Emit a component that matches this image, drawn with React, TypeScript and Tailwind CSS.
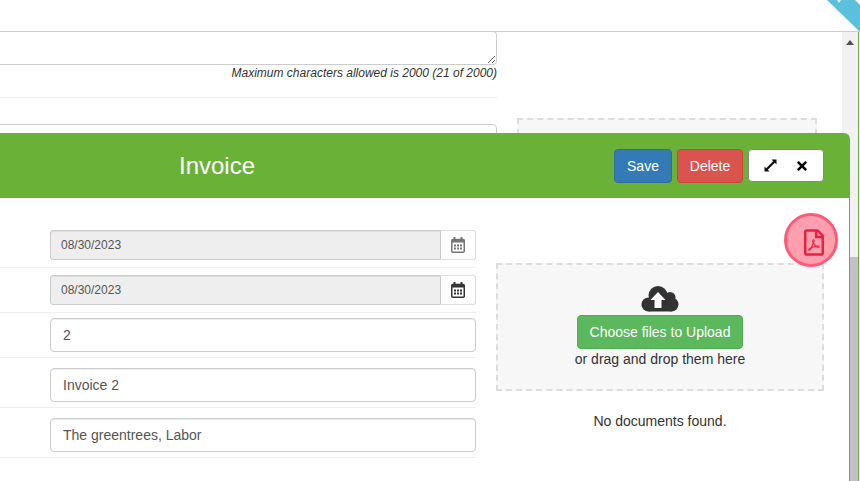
import React from 'react';
import { FaRegFilePdf, FaTimes } from 'react-icons/fa';

const font = "font-['Liberation_Sans',Arial,sans-serif]";

const CalendarIcon = ({ muted }: { muted?: boolean }) => {
  const color = muted ? '#777' : '#333';
  return (
    <svg width="14" height="16" viewBox="0 0 14 16" className="block">
      <rect x="2.5" y="0" width="2" height="3" fill={color} />
      <rect x="9.5" y="0" width="2" height="3" fill={color} />
      <rect x="0.75" y="2.5" width="12.5" height="12.75" rx="1" fill="#fff" stroke={color} strokeWidth="1.5" />
      <rect x="1" y="2.5" width="12" height="3" fill={color} />
      <g fill={color}>
        <rect x="3" y="7.5" width="2" height="2" />
        <rect x="6" y="7.5" width="2" height="2" />
        <rect x="9" y="7.5" width="2" height="2" />
        <rect x="3" y="10.5" width="2" height="2" />
        <rect x="6" y="10.5" width="2" height="2" />
        <rect x="9" y="10.5" width="2" height="2" />
      </g>
    </svg>
  );
};

const DateField = ({ value, muted }: { value: string; muted?: boolean }) => (
  <div className="flex h-[30px] w-[426px] text-xs text-[#555]">
    <div className="flex flex-1 items-center rounded-l-[3px] border border-[#ccc] bg-[#eee] px-[10px] shadow-[inset_0_1px_1px_rgba(0,0,0,0.075)]">
      {value}
    </div>
    <div className="flex w-[35px] items-center justify-center rounded-r-[3px] border border-l-0 border-[#ddd] bg-white">
      <CalendarIcon muted={muted} />
    </div>
  </div>
);

const TextField = ({ value }: { value: string }) => (
  <div className="flex h-[34px] w-[426px] items-center rounded-[4px] border border-[#ccc] bg-white px-3 text-sm text-[#555] shadow-[inset_0_1px_1px_rgba(0,0,0,0.075)]">
    {value}
  </div>
);

const rows = [
  { pad: 'pb-[7px]', field: <DateField value="08/30/2023" muted /> },
  { pad: 'pt-[7px] pb-[7px]', field: <DateField value="08/30/2023" /> },
  { pad: 'pt-[5px] pb-[5px]', field: <TextField value="2" /> },
  { pad: 'pt-[10px] pb-[5px]', field: <TextField value="Invoice 2" /> },
  { pad: 'pt-[10px] pb-[5px]', field: <TextField value="The greentrees, Labor" /> },
];

const CloudUpload = () => (
  <svg width="38" height="26" viewBox="0 0 38 26" className="block">
    <g fill="#333">
      <circle cx="7.5" cy="18.5" r="7" />
      <circle cx="17" cy="9.5" r="9.5" />
      <circle cx="29" cy="11.5" r="5.5" />
      <circle cx="30.5" cy="18.5" r="7" />
      <rect x="7.5" y="14" width="23" height="11.5" />
    </g>
    <path d="M17 6 L24.5 14 H20.5 V22 H13.5 V14 H9.5 Z" fill="#fff" />
  </svg>
);

const ExpandIcon = () => (
  <svg width="13" height="13" viewBox="0 0 13 13" className="block">
    <path d="M7.5 0.5 H12.5 V5.5 L10.8 3.8 L3.8 10.8 L5.5 12.5 H0.5 V7.5 L2.2 9.2 L9.2 2.2 Z" fill="#111" />
  </svg>
);

const PageBehind = () => (
  <div className="flex h-[449px] min-w-0 flex-1">
    <div className="w-[497px] shrink-0">
      <textarea
        readOnly
        className="-mt-px -ml-[23px] block h-[34px] w-[520px] rounded-[4px] border border-[#ccc] bg-white"
      />
      <p className="text-right text-xs leading-[17px] text-[#333] italic">
        Maximum characters allowed is 2000 (21 of 2000)
      </p>
      <div className="mt-[15px] border-b border-[#eee]" />
      <div className="mt-[26px] -ml-[23px] h-[34px] w-[520px] rounded-[4px] border border-[#ccc] bg-white" />
    </div>
    <div className="mt-[86px] ml-5 h-[60px] w-[300px] border-2 border-dashed border-[#ddd] bg-[#f7f7f7]" />
  </div>
);

const Scrollbar = () => (
  <div className="flex h-[449px] w-4 shrink-0 flex-col bg-[#f1f1f1]">
    <div className="flex h-[17px] items-center justify-center pt-[3px]">
      <div className="h-0 w-0 border-x-[4px] border-b-[5px] border-x-transparent border-b-[#505050]" />
    </div>
    <div className="mt-[208px] flex-1 bg-[#c1c1c1]" />
  </div>
);

const App = () => {
  return (
    <div className={`${font} relative h-[481px] w-[860px] overflow-hidden bg-white text-sm text-[#333]`}>
      <div className="h-[32px] border-b border-[#ccc]" />
      <div className="flex">
        <PageBehind />
        <div className="w-[25px] shrink-0" />
        <Scrollbar />
        <div className="w-[1px] shrink-0 bg-[#6ab138]" />
        <div className="w-[1px] shrink-0 bg-white" />
      </div>

      {/* corner ribbon */}
      <svg width="33" height="32" viewBox="0 0 33 32" className="absolute top-0 right-0">
        <polygon points="0,0 33,0 33,32" fill="#5bc0de" />
        <path d="M10 0 L12 2.5 L14 0 Z M28 0 L33 0 L33 5 Z" fill="#fff" />
      </svg>

      {/* invoice dialog */}
      <div className="absolute top-[133px] left-0 flex h-[348px] w-[850px] flex-col">
        <div className="flex h-[65px] shrink-0 items-center rounded-tr-[6px] bg-[#6ab138]">
          <h2 className="w-[434px] text-center text-2xl font-normal text-white">Invoice</h2>
          <div className="ml-auto flex items-center gap-[5px] pr-[26px]">
            <button className="h-[34px] w-[58px] rounded-[4px] border border-[#2e6da4] bg-[#337ab7] text-sm text-white">
              Save
            </button>
            <button className="h-[34px] w-[66px] rounded-[4px] border border-[#d43f3a] bg-[#d9534f] text-sm text-white">
              Delete
            </button>
            <div className="flex h-[33px] w-[76px] items-center justify-center gap-[19px] rounded-[4px] border border-[#888] bg-white">
              <ExpandIcon />
              <FaTimes className="h-[14px] w-[12px] text-black" />
            </div>
          </div>
        </div>

        <div className="relative flex flex-1 border-r border-[#6ab138] bg-white">
          <div className="w-[476px] shrink-0 pt-8">
            {rows.map((row, index) => (
              <div key={index} className={`border-b border-[#eee] pl-[50px] ${row.pad}`}>
                {row.field}
              </div>
            ))}
          </div>
          <div className="ml-5 w-[328px] pt-[65px]">
            <div className="flex h-[128px] flex-col items-center border-2 border-dashed border-[#ddd] bg-[#f7f7f7] pt-[21px]">
              <CloudUpload />
              <button className="mt-[3px] h-[34px] w-[166px] rounded-[4px] border border-[#4cae4c] bg-[#5cb85c] text-sm text-white">
                Choose files to Upload
              </button>
              <p className="leading-5">or drag and drop them here</p>
            </div>
            <p className="mt-5 text-center leading-5">No documents found.</p>
          </div>

          <div className="absolute top-[15px] left-[784px] flex h-[54px] w-[54px] items-center justify-center rounded-full border-[3px] border-[#ff5a78] bg-[#ff9eae]">
            <FaRegFilePdf className="mt-[5px] ml-[6px] h-[27px] w-[20px] text-[#e8213f]" />
          </div>
        </div>
      </div>
    </div>
  );
};

export default App;
